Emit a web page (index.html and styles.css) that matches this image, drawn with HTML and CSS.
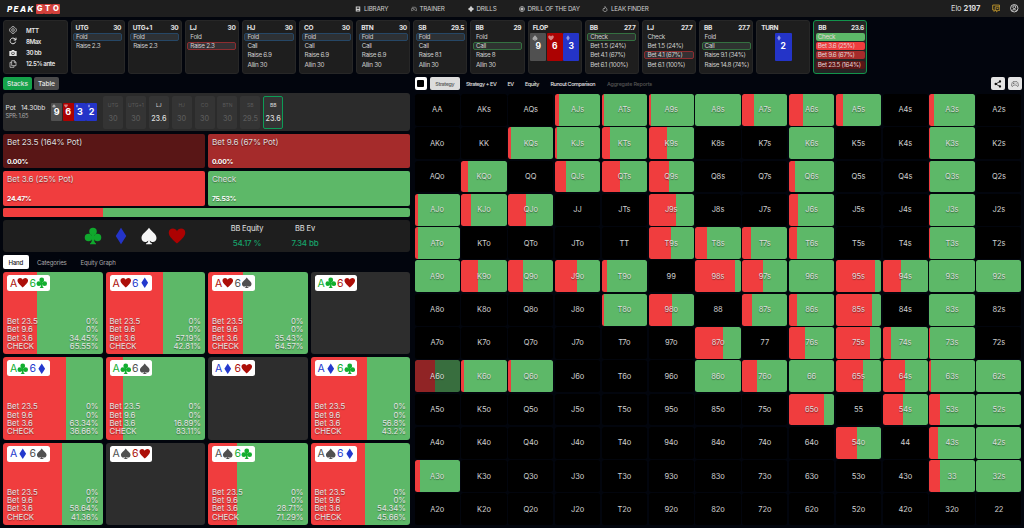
FILE: index.html
```
<!DOCTYPE html>
<html lang="en">

<head>
  <meta charset="utf-8">
  <title>PeakGTO</title>
  <link rel="stylesheet" href="styles.css">
</head>

<body>

  <svg class="sprite" width="0" height="0">
    <symbol id="heart" viewBox="0 0 24 24"><path d="M12 22C8 18 1 13 1 7.500C1 4 3.500 2 6.500 2C9 2 11 3.500 12 5.500C13 3.500 15 2 17.500 2C20.500 2 23 4 23 7.500C23 13 16 18 12 22Z"/></symbol>
    <symbol id="diamond" viewBox="0 0 24 24"><path d="M12 1L19 12L12 23L5 12Z"/></symbol>
    <symbol id="spade" viewBox="0 0 24 24"><path d="M12 1C9 6 2 9 2 14.500C2 18 4.500 20 7 20C8.800 20 10.200 19.200 11 18C11 20 10 21.500 8 22V23H16V22C14 21.500 13 20 13 18C13.800 19.200 15.200 20 17 20C19.500 20 22 18 22 14.500C22 9 15 6 12 1Z"/></symbol>
    <symbol id="club" viewBox="0 0 24 24"><circle cx="12" cy="6" r="5"/><circle cx="6" cy="14" r="5"/><circle cx="18" cy="14" r="5"/><path d="M10.500 9H13.500V12H16V16L13.500 15C13.500 19 14 21 16 22V23H8V22C10 21 10.500 19 10.500 15L8 16V12H10.500Z"/></symbol>
    <symbol id="gamepad" viewBox="0 0 24 24"><path d="M6 5H18C20 5 23 15 22 18C21 21 18 19 16 15H8C6 19 3 21 2 18C1 15 4 5 6 5ZM6 10H10M8 8V12M15 9V10M17 11V12" fill="none" stroke="currentColor" stroke-width="2"/></symbol>
  </svg>

  <header class="navbar">
    <div class="logo"><span class="logo-peak">PEAK</span><span class="logo-box">G</span><span class="logo-box">T</span><span class="logo-box">O</span></div>
    <nav>
      <a class="nav-library"><svg viewBox="0 0 24 24"><path d="M3 2H21V22H3ZM7 6V11H17V6ZM7 16V18H17V16Z" fill-rule="evenodd"/></svg>LIBRARY</a>
      <a class="nav-trainer"><svg><use href="#gamepad"/></svg>TRAINER</a>
      <a class="nav-drills"><svg viewBox="0 0 24 24"><path d="M8 2H16V5L19 8H22V16H19L16 19V22H8V19L5 16H2V8H5L8 5Z"/></svg>DRILLS</a>
      <a class="nav-day"><svg viewBox="0 0 24 24" fill="none" stroke="currentColor" stroke-width="2.500"><circle cx="12" cy="12" r="10"/><circle cx="12" cy="12" r="4" fill="currentColor"/><path d="M12 2V7M12 17V22M2 12H7M17 12H22"/></svg>DRILL OF THE DAY</a>
      <a class="nav-leak"><svg viewBox="0 0 24 24" fill="none" stroke="currentColor" stroke-width="2.500"><path d="M12 2C14 7 20 9 20 15C20 20 16 22 12 22C8 22 4 20 4 15C4 12 6 9 8 8L10 11C12 8 12 5 12 2Z"/></svg>LEAK FINDER</a>
    </nav>
    <div class="account">
      <span>Elo <b>2197</b></span>
      <svg class="chat" viewBox="0 0 24 24" fill="none" stroke="currentColor" stroke-width="2.500"><path d="M6 17H2V3H21V8M9 8H22V18H17L13 22V18H9ZM13 13H18M6 17V21L9 18"/></svg>
      <svg viewBox="0 0 24 24" fill="none" stroke="currentColor" stroke-width="2.500"><circle cx="12" cy="12" r="10.500"/><circle cx="12" cy="9" r="4"/><path d="M5 19C7 15 17 15 19 19"/></svg>
    </div>
  </header>

  <section class="history" id="history">
    <div class="setup">
      <div><svg viewBox="0 0 24 24" fill="none" stroke="currentColor" stroke-width="2"><path d="M9 2H15L16 5L19 6L22 9V15L19 18L16 19L15 22H9L8 19L5 18L2 15V9L5 6L8 5Z"/><circle cx="12" cy="12" r="4"/></svg>MTT</div>
      <div><svg viewBox="0 0 24 24" fill="none" stroke="currentColor" stroke-width="3"><path d="M20 14A8.500 8.500 0 1 1 18 6L21 9M21 2V9H14"/></svg>8Max</div>
      <div><svg viewBox="0 0 24 24"><path d="M1 6H7L9 3H15L17 6H23V21H1ZM12 8A5 5 0 1 0 12 18A5 5 0 1 0 12 8ZM12 10A3 3 0 1 1 12 16A3 3 0 1 1 12 10Z" fill-rule="evenodd"/></svg>30 bb</div>
      <div><svg viewBox="0 0 24 24" fill="none" stroke="currentColor" stroke-width="2"><path d="M8 2H17L21 7V17H8ZM16 2V8H21M8 7H3V22H15V17"/></svg>12.5% ante</div>
    </div>
  </section>

  <main>
    <div class="left">
      <div class="view-tabs">
        <button class="stacks">Stacks</button>
        <button class="table">Table</button>
      </div>

      <div class="pot">
        <div class="pot-size">
          <div>Pot <span>14.30bb</span></div>
          <small>SPR: 1.65</small>
        </div>
        <div class="board">
          <span class="s"><svg><use href="#spade"/></svg>9</span>
          <span class="h"><svg><use href="#heart"/></svg>6</span>
          <span class="d"><svg><use href="#diamond"/></svg>3</span>
          <span class="d"><svg><use href="#diamond"/></svg>2</span>
        </div>
        <div class="seats">
          <div>UTG<b>30</b></div>
          <div>UTG+1<b>30</b></div>
          <div class="in">LJ<b>23.6</b></div>
          <div>HJ<b>30</b></div>
          <div>CO<b>30</b></div>
          <div>BTN<b>30</b></div>
          <div>SB<b>29.5</b></div>
          <div class="in active">BB<b>23.6</b></div>
        </div>
      </div>

      <div class="actions">
        <div class="bet-xl">Bet 23.5 (164% Pot)<b>0.00%</b></div>
        <div class="bet-l">Bet 9.6 (67% Pot)<b>0.00%</b></div>
        <div class="bet-s">Bet 3.6 (25% Pot)<b>24.47%</b></div>
        <div class="check">Check<b>75.53%</b></div>
      </div>

      <div class="freq-bar"><div style="width: 24.47%"></div></div>

      <div class="summary">
        <div class="suits">
          <svg class="club"><use href="#club"/></svg>
          <svg class="diamond"><use href="#diamond"/></svg>
          <svg class="spade"><use href="#spade"/></svg>
          <svg class="heart"><use href="#heart"/></svg>
        </div>
        <div class="stat equity">BB Equity<b>54.17 %</b></div>
        <div class="stat ev">BB Ev<b>7.34 bb</b></div>
      </div>

      <div class="hand-tabs">
        <button class="selected">Hand</button>
        <button class="t-cat">Categories</button>
        <button>Equity Graph</button>
      </div>

      <div class="hands" id="hands"></div>
    </div>

    <div class="right">
      <div class="range-tabs">
        <button class="square"><i></i></button>
        <button class="selected">Strategy</button>
        <button class="t-sev">Strategy + EV</button>
        <button class="t-ev">EV</button>
        <button class="t-eq">Equity</button>
        <button class="t-run">Runout Comparison</button>
        <button class="t-agg" disabled>Aggregate Reports</button>
        <div class="tools">
          <button><svg viewBox="0 0 24 24"><circle cx="18" cy="4.500" r="3.500"/><circle cx="5" cy="12" r="3.500"/><circle cx="18" cy="19.500" r="3.500"/><path d="M18 4.500L5 12L18 19.500" fill="none" stroke="currentColor" stroke-width="2.500"/></svg></button>
          <button class="pad"><svg><use href="#gamepad"/></svg></button>
        </div>
      </div>
      <div class="matrix" id="matrix"></div>
    </div>
  </main>

  <script src="script.js"></script>
</body>

</html>
```
FILE: styles.css
```
* {
  box-sizing: border-box;
}

body {
  margin: 0;
  width: 1024px;
  height: 528px;
  overflow: hidden;
  background: #02050d;
  color: #e4e4e4;
  font-family: Inter, "Liberation Sans", sans-serif;
  font-size: 7px;
}

.sprite {
  position: absolute;
}

svg {
  fill: currentColor;
  flex: none;
}

svg[fill=none] {
  fill: none;
}

button {
  border: 0;
  padding: 0;
  font: inherit;
  letter-spacing: inherit;
  color: inherit;
  background: none;
  border-radius: 2px;
}

/* top bar */

.navbar {
  display: flex;
  align-items: center;
  height: 17px;
  background: #1e1e1e;
}

.logo {
  display: flex;
  align-items: center;
  width: 355px;
  padding: 1px 0 0 7px;
  font-weight: 800;
  font-size: 7.600px;
  color: #fff;
}

.logo-peak {
  width: 28.500px;
  font-style: italic;
  font-size: 8px;
  letter-spacing: 1.400px;
}

.logo-box {
  width: 8px;
  height: 10px;
  margin-right: 0.200px;
  border-radius: 1px;
  background: #d2403b;
  line-height: 10px;
  text-align: center;
}

nav {
  display: flex;
  width: 588px;
  color: #cfcfcf;
  font-size: 6.300px;
  letter-spacing: -0.250px;
}

nav a {
  display: flex;
  align-items: center;
  gap: 3px;
}

nav svg {
  width: 6px;
  height: 6px;
}

.nav-library { width: 55.500px; }
.nav-trainer { width: 57px; }
.nav-drills { width: 51px; }
.nav-day { width: 83.500px; }

.account {
  display: flex;
  align-items: center;
  color: #ddd;
  font-size: 7.500px;
  letter-spacing: -0.100px;
  padding-left: 8px;
}

.account svg {
  width: 8.500px;
  height: 8.500px;
  margin-left: 10px;
}

.account .chat {
  margin-left: 11.500px;
  color: #c59a2c;
}

/* hand history */

.history {
  display: flex;
  gap: 3px;
  padding: 3px 3px 0;
}

.setup,
.spot {
  height: 54px;
  border: 1px solid #272727;
  border-radius: 3px;
  background: #1e1e1e;
}

.setup {
  display: flex;
  flex-direction: column;
  justify-content: space-between;
  width: 64.500px;
  padding: 5px 5px 5px;
  font-weight: 600;
  font-size: 6.200px;
  letter-spacing: -0.450px;
}

.setup div {
  display: flex;
  align-items: center;
  gap: 9px;
  white-space: nowrap;
}

.setup svg {
  width: 8px;
  height: 8px;
}

.spot {
  width: 54.150px;
  padding: 2px 1.500px;
}

.spot h3 {
  display: flex;
  justify-content: space-between;
  margin: 0;
  padding: 0 1px 0 2.500px;
  font-size: 6.500px;
  letter-spacing: -0.350px;
  line-height: 10px;
  font-weight: 700;
}

.spot p {
  height: 8px;
  margin: 0 0 1.200px;
  padding-left: 2px;
  border: 1px solid transparent;
  border-radius: 2px;
  line-height: 6px;
  font-size: 6.300px;
  letter-spacing: -0.330px;
  white-space: nowrap;
  color: #cfcfcf;
}

.spot .fold { border-color: #264766; background: #2d3135; }
.spot .call { border-color: #347040; background: #2e3330; }
.spot .raise { border-color: #8d2d30; background: #353033; }

.spot.current {
  border-color: #12934b;
  background: #242424;
}

.spot.current p { color: #e5d5d5; border: 0; line-height: 8px; }
.current .check { background: #5db868; }
.current .bet-s { background: #f03d3e; }
.current .bet-l { background: #a52b2b; }
.current .bet-xl { background: #591616; }

.flop {
  display: flex;
  gap: 0.500px;
  justify-content: center;
}

.flop span,
.board span {
  position: relative;
  text-align: center;
  font-weight: 700;
  color: #fff;
}

.flop span {
  width: 16.700px;
  height: 27.500px;
  border-radius: 1px;
  font-size: 8.500px;
  line-height: 27px;
}

.flop svg,
.board svg {
  position: absolute;
  left: 1.500px;
  top: 2px;
  width: 6px;
  height: 6px;
  opacity: 0.5;
}

.s { background: #505050; }
.h { background: #ac0202; }
.d { background: #2434c8; }

main {
  display: flex;
  gap: 4.500px;
  padding: 3px 2.500px 0 3px;
}

.left {
  width: 407px;
}

/* left column */

.view-tabs {
  display: flex;
  gap: 2px;
  height: 16px;
  font-size: 6.700px;
  letter-spacing: -0.100px;
  font-weight: 500;
}

.view-tabs button {
  height: 13px;
}

.view-tabs .stacks {
  width: 29px;
  background: #15a34a;
}

.view-tabs .table {
  width: 25px;
  background: #4b4b4b;
}

.pot {
  display: flex;
  align-items: center;
  height: 38px;
  border-radius: 3px;
  background: #2b2b2b;
}

.pot-size {
  width: 48px;
  padding-left: 2.500px;
  font-size: 6.700px;
  letter-spacing: -0.100px;
  line-height: 7.500px;
}

.pot-size span {
  margin-left: 3.500px;
}

.pot-size small {
  display: block;
  font-size: 5.700px;
  letter-spacing: -0.250px;
  line-height: 6px;
  color: #aaa;
}

.board {
  display: flex;
  gap: 0.500px;
  width: 52px;
}

.board span {
  width: 11.200px;
  height: 18px;
  border-radius: 1px;
  font-size: 9px;
  line-height: 18px;
}

.board svg {
  left: 1px;
  top: 1px;
  width: 4px;
  height: 4px;
}

.seats {
  display: flex;
  gap: 2.900px;
}

.seats div {
  display: flex;
  flex-direction: column;
  align-items: center;
  justify-content: space-between;
  width: 20px;
  height: 33px;
  padding: 6px 0;
  border-radius: 2px;
  background: #343434;
  color: #5a5a5a;
  font-size: 5px;
}

.seats b {
  font-size: 7.200px;
  font-weight: 500;
}

.seats .in {
  color: #ddd;
}

.seats .active {
  border: 1px solid #0d9b56;
  padding: 5px 0;
}

.actions {
  display: grid;
  grid-template-columns: 1fr 1fr;
  gap: 2.500px 3px;
  padding: 2.500px 0;
}

.actions div {
  display: flex;
  flex-direction: column;
  justify-content: space-between;
  height: 34.800px;
  padding: 3px 4px 2.500px;
  border-radius: 2px;
  font-size: 8.200px;
  letter-spacing: -0.120px;
  color: #ddd;
  text-shadow: 0 1px 1px #0006;
}

.actions b {
  font-size: 6.800px;
  letter-spacing: -0.300px;
  color: #fff;
}

.actions .bet-xl { background: #591616; }
.actions .bet-l { background: #a52b2b; }
.actions .bet-s { background: #f03d3e; }
.actions .check { background: #5db868; }

.freq-bar {
  height: 8.500px;
  border-radius: 2px;
  overflow: hidden;
  background: #5db868;
}

.freq-bar div {
  height: 100%;
  background: #f03d3e;
}

.summary {
  display: flex;
  align-items: center;
  height: 32.500px;
  margin-top: 3px;
  border-radius: 3px;
  background: #1e1e1e;
}

.suits {
  display: flex;
  gap: 10px;
  width: 219px;
  padding-left: 81px;
}

.suits svg {
  width: 18px;
  height: 18px;
}

.suits .club { color: #10a82d; }
.suits .diamond { color: #2434c8; }
.suits .spade { color: #f5f5f5; }
.suits .heart { color: #ac0202; }

.stat {
  width: 50px;
  text-align: center;
  font-size: 7.500px;
  letter-spacing: -0.150px;
}

.stat b {
  display: block;
  margin-top: 5px;
  font-weight: 500;
  font-size: 8px;
  color: #16a56c;
}

.stat.ev {
  margin-left: 8px;
}

.hand-tabs {
  display: flex;
  gap: 8.500px;
  height: 20px;
  padding-top: 3px;
  font-size: 6.100px;
  letter-spacing: -0.180px;
  color: #aaa;
}

.hand-tabs button {
  height: 14px;
}

.hand-tabs .selected {
  width: 25.500px;
  background: #fff;
  color: #222;
  font-weight: 500;
}

.hand-tabs .t-cat {
  width: 35px;
  text-align: left;
}

/* combo cards */

.hands {
  display: grid;
  grid-template-columns: repeat(4, 1fr);
  grid-auto-rows: 82.400px;
  gap: 3px;
}

.combo {
  display: flex;
  flex-direction: column;
  justify-content: space-between;
  align-items: flex-start;
  padding: 3px 4px 4px;
  border-radius: 3px;
  background: #2d2d2d;
}

.combo-name {
  display: flex;
  align-items: center;
  width: 42.500px;
  height: 16px;
  padding-left: 3px;
  border-radius: 2.500px;
  background: #fff;
  font-size: 10.500px;
}

.combo-name span {
  display: flex;
  align-items: center;
  width: 19.500px;
}

.combo-name svg {
  width: 11.500px;
  height: 11.500px;
}

.c-heart { color: #ac0e08; }
.c-club { color: #12ae2f; }
.c-diamond { color: #2439cd; }
.c-spade { color: #505050; }

.combo ul {
  width: 100%;
  margin: 0;
  padding: 0;
  list-style: none;
  font-size: 7.800px;
  line-height: 8.400px;
  color: #e4e4e4;
  text-shadow: 0 1px 1px #0006;
}

.combo li {
  display: flex;
  justify-content: space-between;
}

/* range matrix */

.right {
  flex: 1;
}

.range-tabs {
  display: flex;
  align-items: center;
  height: 13px;
  margin-bottom: 4px;
  font-size: 5.400px;
  letter-spacing: -0.380px;
  font-weight: 500;
}

.range-tabs button {
  height: 13px;
  text-align: left;
  white-space: nowrap;
}

.range-tabs .square {
  display: flex;
  align-items: center;
  justify-content: center;
  width: 12.500px;
  margin-right: 2.500px;
  background: #fff;
}

.square i {
  width: 7px;
  height: 7px;
  border-radius: 1px;
  background: #000;
}

.range-tabs .selected {
  width: 30.500px;
  margin-right: 6px;
  background: #dcdcdc;
  color: #555;
  text-align: center;
}

.range-tabs .t-sev { width: 41.500px; }
.range-tabs .t-ev { width: 17.500px; }
.range-tabs .t-eq { width: 25.500px; }
.range-tabs .t-run { width: 56.500px; }
.range-tabs .t-agg { color: #555; letter-spacing: -0.200px; }

.tools {
  display: flex;
  gap: 3px;
  margin-left: auto;
}

.tools button {
  display: flex;
  align-items: center;
  justify-content: center;
  width: 14px;
  background: #e4e4e4;
  color: #111;
}

.tools svg {
  width: 8px;
  height: 8px;
}

.tools .pad {
  color: #555;
}

.matrix {
  display: grid;
  grid-template-columns: repeat(13, 1fr);
  grid-auto-rows: 31.900px;
  gap: 1.400px 1.600px;
}

.cell {
  display: flex;
  align-items: center;
  justify-content: center;
  border-radius: 2.500px;
  background: #000;
  color: #d0d0d0;
  font-size: 7.500px;
  letter-spacing: -0.100px;
}

.cell.played {
  color: #ddd;
  text-shadow: 0 1px 1px #0007;
}
```
FILE: script.js
```
const RED = "#f03d3e";
const GREEN = "#5db868";

function split(red, from = RED, to = GREEN) {
  return `linear-gradient(to right, ${from} ${red}%, ${to} ${red}%)`;
}

function icon(name) {
  return `<svg><use href="#${name}"/></svg>`;
}

// action history: position, stack, options, chosen option, class of the chosen one
const spots = [
  ["UTG", 30, ["Fold", "Raise 2.3"], 0, "fold"],
  ["UTG+1", 30, ["Fold", "Raise 2.3"], 0, "fold"],
  ["LJ", 30, ["Fold", "Raise 2.3"], 1, "raise"],
  ["HJ", 30, ["Fold", "Call", "Raise 6.9", "Allin 30"], 0, "fold"],
  ["CO", 30, ["Fold", "Call", "Raise 6.9", "Allin 30"], 0, "fold"],
  ["BTN", 30, ["Fold", "Call", "Raise 6.9", "Allin 30"], 0, "fold"],
  ["SB", 29.5, ["Fold", "Call", "Raise 8.1", "Allin 30"], 0, "fold"],
  ["BB", 29, ["Fold", "Call", "Raise 8", "Allin 30"], 1, "call"],
  ["FLOP", "", [["s", "spade", 9], ["h", "heart", 6], ["d", "diamond", 3]]],
  ["BB", 27.7, ["Check", "Bet 1.5 (24%)", "Bet 4.1 (67%)", "Bet 6.1 (100%)"], 0, "call"],
  ["LJ", 27.7, ["Check", "Bet 1.5 (24%)", "Bet 4.1 (67%)", "Bet 6.1 (100%)"], 2, "raise"],
  ["BB", 27.7, ["Fold", "Call", "Raise 9.1 (34%)", "Raise 14.8 (74%)"], 1, "call"],
  ["TURN", "", [["d", "diamond", 2]]],
  ["BB", 23.6, ["Check", "Bet 3.6 (25%)", "Bet 9.6 (67%)", "Bet 23.5 (164%)"]],
];
const currentClasses = ["check", "bet-s", "bet-l", "bet-xl"];

spots.forEach(([name, stack, options, chosen, cls], n) => {
  const last = n === spots.length - 1;
  const div = document.createElement("div");
  div.className = last ? "spot current" : "spot";
  let html = `<h3>${name}<span>${stack}</span></h3>`;
  if (stack === "") {
    html += `<div class="flop">${options.map(([c, suit, rank]) => `<span class="${c}">${icon(suit)}${rank}</span>`).join("")}</div>`;
  } else {
    html += options.map((text, i) => {
      const c = last ? currentClasses[i] : i === chosen ? cls : "";
      return `<p class="${c}">${text}</p>`;
    }).join("");
  }
  div.innerHTML = html;
  document.getElementById("history").append(div);
});

// A6o combos: suits, bet 3.6 %, check %
const combos = [
  ["heart", "club", 34.45, 65.55],
  ["heart", "diamond", 57.19, 42.81],
  ["heart", "spade", 35.43, 64.57],
  ["club", "heart"],
  ["club", "diamond", 63.34, 36.66],
  ["club", "spade", 16.89, 83.11],
  ["diamond", "heart"],
  ["diamond", "club", 56.8, 43.2],
  ["diamond", "spade", 58.64, 41.36],
  ["spade", "heart"],
  ["spade", "club", 28.71, 71.29],
  ["spade", "diamond", 54.34, 45.66],
];

combos.forEach(([first, second, bet, check]) => {
  const div = document.createElement("div");
  div.className = "combo";
  div.innerHTML = `<div class="combo-name"><span class="c-${first}">A${icon(first)}</span><span class="c-${second}">6${icon(second)}</span></div>`;
  if (bet) {
    div.style.background = split(bet);
    div.innerHTML += `<ul><li>Bet 23.5<span>0%</span></li><li>Bet 9.6<span>0%</span></li>
      <li>Bet 3.6<span>${bet}%</span></li><li>CHECK<span>${check}%</span></li></ul>`;
  }
  document.getElementById("hands").append(div);
});

// betting frequency of every hand in range
const range = {
  AJs: 9, ATs: 4, A9s: 5, A8s: 0, A7s: 27, A6s: 32, A5s: 15, A3s: 11,
  KQs: 7, KJs: 5, KTs: 17, K9s: 41, K6s: 0, K3s: 2,
  KQo: 15, QJs: 24, QTs: 41, Q9s: 44, Q6s: 13, Q3s: 2,
  AJo: 7, KJo: 22, QJo: 40, J9s: 61, J6s: 20, J3s: 2,
  ATo: 7, T9s: 49, T8s: 26, T7s: 19, T6s: 18, T3s: 2,
  A9o: 0, K9o: 38, Q9o: 34, J9o: 50, T9o: 11, "98s": 88, "97s": 47, "96s": 0, "95s": 86, "94s": 41, "93s": 0, "92s": 0,
  T8o: 4, "98o": 50, "87s": 22, "86s": 17, "85s": 79, "83s": 0,
  "87o": 61, "76s": 36, "75s": 76, "74s": 17, "73s": 2,
  A6o: 45, K6o: 7, Q6o: 7, "86o": 0, "76o": 33, "66": 0, "65s": 61, "64s": 48, "63s": 4, "62s": 0,
  "65o": 78, "54s": 45, "53s": 23, "52s": 0,
  "54o": 46, "43s": 19, "42s": 0,
  A3o: 11, "33": 25, "32s": 0,
};
const ranks = "AKQJT98765432";

for (let row = 0; row < 13; row++) {
  for (let col = 0; col < 13; col++) {
    let hand = ranks[row] + ranks[col];
    if (col > row) hand += "s";
    if (col < row) hand = ranks[col] + ranks[row] + "o";
    const cell = document.createElement("div");
    cell.className = "cell";
    cell.textContent = hand;
    if (hand in range) {
      cell.classList.add("played");
      cell.style.background = hand === "A6o" ? split(45, "#902425", "#386e3e") : split(range[hand]);
    }
    document.getElementById("matrix").append(cell);
  }
}
```
